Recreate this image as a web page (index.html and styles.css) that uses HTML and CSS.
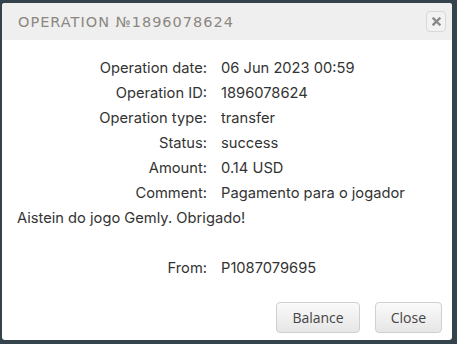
FILE: index.html
```html
<!DOCTYPE html>
<html lang="en">
<head>
    <meta charset="UTF-8">
    <meta name="viewport" content="width=device-width, initial-scale=1.0">
    <title>Operation</title>
    <link rel="stylesheet" href="styles.css">
</head>
<body>

    <div class="dialog">
        <div class="dialog-header">
            <span class="dialog-title">Operation №1896078624</span>
            <button class="close-x" type="button">
                <svg width="9" height="9" viewBox="0 0 9 9"><path d="M1.5 1.5 L7.5 7.5 M7.5 1.5 L1.5 7.5" stroke="#8a8a8a" stroke-width="2.4" stroke-linecap="square"/></svg>
            </button>
        </div>

        <div class="dialog-body">
            <div class="row"><span class="label">Operation date:</span>06 Jun 2023 00:59</div>
            <div class="row"><span class="label">Operation ID:</span>1896078624</div>
            <div class="row"><span class="label">Operation type:</span>transfer</div>
            <div class="row"><span class="label">Status:</span>success</div>
            <div class="row"><span class="label">Amount:</span>0.14 USD</div>
            <div class="row"><span class="label">Comment:</span>Pagamento para o jogador Aistein do jogo Gemly. Obrigado!</div>
            <div class="row empty"></div>
            <div class="row"><span class="label">From:</span>P1087079695</div>
        </div>

        <div class="dialog-footer">
            <button class="btn" type="button">Balance</button>
            <button class="btn" type="button">Close</button>
        </div>
    </div>

</body>
</html>
```

FILE: styles.css
```css
body {
    margin: 0;
    background-color: #34434c;
    font-family: Inter, "Open Sans", sans-serif;
}
.dialog {
    margin: 3px 0 0 2px;
    width: 450px;
    height: 337px;
    background-color: white;
    border-radius: 3px;
    overflow: hidden;
    display: flex;
    flex-direction: column;
}
.dialog-header {
    height: 37px;
    background-color: #efefef;
    display: flex;
    align-items: center;
    justify-content: space-between;
    padding: 0 6px 0 16px;
}
.dialog-title {
    font-family: "DejaVu Sans", sans-serif;
    text-transform: uppercase;
    font-size: 14.5px;
    letter-spacing: 1px;
    color: #8c8780;
}
.close-x {
    width: 20px;
    height: 21px;
    padding: 0;
    border: 1px solid #d8d8d8;
    border-radius: 4px;
    background-color: #f2f2f2;
    display: flex;
    align-items: center;
    justify-content: center;
}
.dialog-body {
    padding: 16px 15px 0 15px;
    font-size: 14.7px;
    line-height: 25px;
    color: #333;
    flex: 1;
}
.label {
    display: inline-block;
    width: 190px;
    margin-right: 14px;
    text-align: right;
}
.empty {
    height: 25px;
}
.dialog-footer {
    display: flex;
    justify-content: flex-end;
    gap: 15px;
    padding: 0 10px 7px 0;
}
.btn {
    font-family: "Open Sans", sans-serif;
    font-size: 14px;
    color: #444;
    height: 31px;
    padding: 0 15px;
    border: 1px solid #d0d0d0;
    border-radius: 4px;
    background: linear-gradient(#fafafa, #e6e6e6);
}
```
